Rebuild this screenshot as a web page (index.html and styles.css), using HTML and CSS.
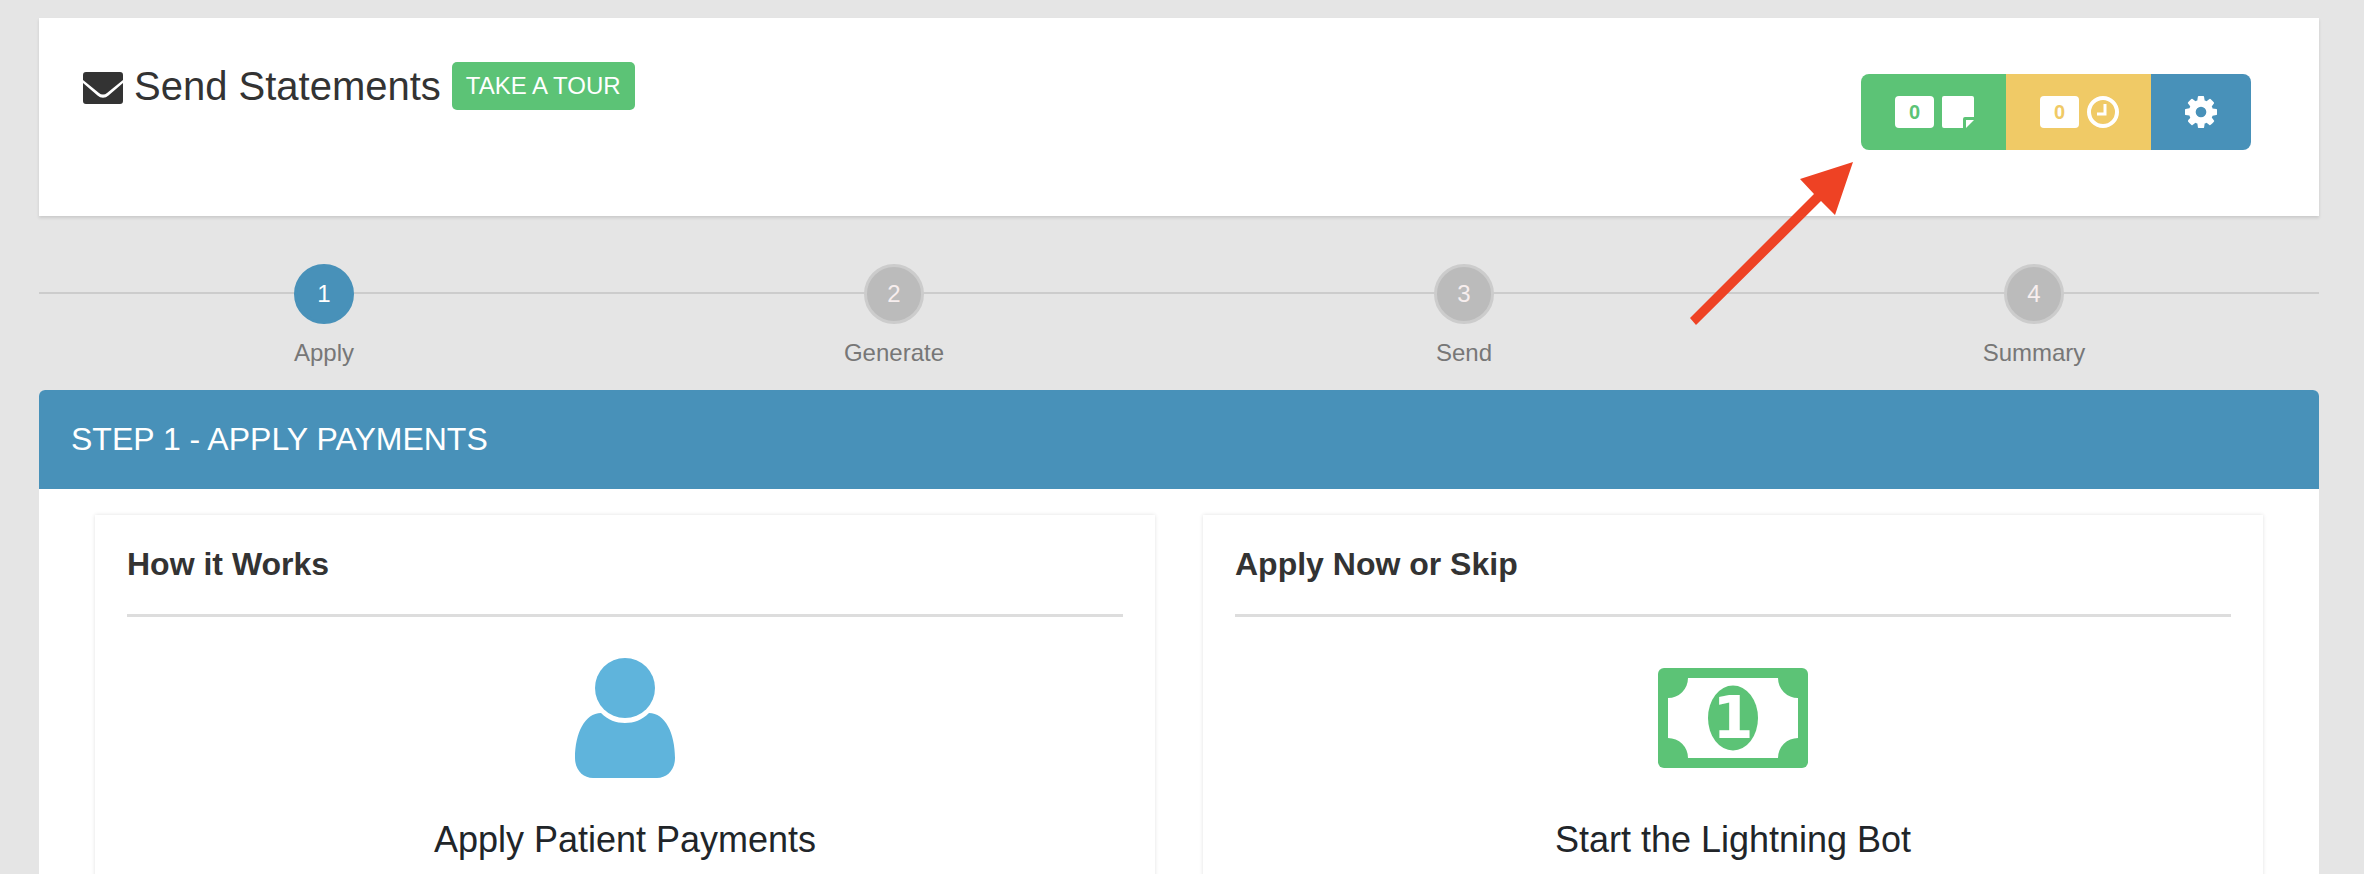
FILE: index.html
```html
<!DOCTYPE html>
<html lang="en">
<head>
<meta charset="utf-8">
<title>Send Statements</title>
<link rel="stylesheet" href="styles.css">
</head>
<body>
<div class="page">
  <header class="top-card">
    <div class="title-row">
      <svg class="mail-icon" viewBox="0 0 40 32"><path d="M3 0h34a3 3 0 0 1 3 3v5L24 21a6 6 0 0 1-8 0L0 8V3a3 3 0 0 1 3-3z" fill="#333"/><path d="M0 11l14.500 12.500a8 8 0 0 0 11 0L40 11v18a3 3 0 0 1-3 3H3a3 3 0 0 1-3-3z" fill="#333"/></svg>
      <h1 class="page-title">Send Statements</h1>
      <a class="tour-btn">TAKE A TOUR</a>
    </div>
    <div class="actions">
      <div class="action action-green">
        <span class="count count-green">0</span>
        <svg class="action-icon" viewBox="0 0 32 32"><path d="M2 0h28a2 2 0 0 1 2 2v19H23a2 2 0 0 0-2 2v9H2a2 2 0 0 1-2-2V2a2 2 0 0 1 2-2z" fill="#fff"/><path d="M24 24h8l-8 8z" fill="#fff"/></svg>
      </div>
      <div class="action action-yellow">
        <span class="count count-yellow">0</span>
        <svg class="action-icon" viewBox="0 0 32 32"><circle cx="16" cy="16" r="14" fill="none" stroke="#fff" stroke-width="4"/><path d="M18 8v10h-8" fill="none" stroke="#fff" stroke-width="3"/></svg>
      </div>
      <div class="action action-blue">
        <svg class="action-icon" viewBox="128 128 1536 1536"><path fill="#fff" d="M1152 896q0-106-75-181t-181-75-181 75-75 181 75 181 181 75 181-75 75-181zm512-109v222q0 12-8 23t-20 13l-185 28q-19 54-39 91 35 50 107 138 10 12 10 25t-9 23q-27 37-99 108t-94 71q-12 0-26-9l-138-108q-44 23-91 38-16 136-29 186-7 28-36 28h-222q-14 0-24.500-8.500t-11.500-21.500l-28-184q-49-16-90-37l-141 107q-10 9-25 9-14 0-25-11-126-114-165-168-7-10-7-23 0-12 8-23 15-21 51-66.500t54-70.500q-27-50-41-99l-183-27q-13-2-21-12.500t-8-23.500v-222q0-12 8-23t19-13l186-28q14-46 39-92-40-57-107-138-10-12-10-24 0-10 9-23 26-36 98.500-107.500t94.500-71.500q13 0 26 10l138 107q44-23 91-38 16-136 29-186 7-28 36-28h222q14 0 24.500 8.500t11.500 21.500l28 184q49 16 90 37l142-107q9-9 24-9 13 0 25 10 129 119 165 170 7 8 7 22 0 12-8 23-15 21-51 66.500t-54 70.500q26 50 41 98l183 28q13 2 21 12.500t8 23.500z"/></svg>
      </div>
    </div>
  </header>

  <nav class="steps">
    <div class="step step-active"><span class="step-dot">1</span><span class="step-label">Apply</span></div>
    <div class="step"><span class="step-dot">2</span><span class="step-label">Generate</span></div>
    <div class="step"><span class="step-dot">3</span><span class="step-label">Send</span></div>
    <div class="step"><span class="step-dot">4</span><span class="step-label">Summary</span></div>
  </nav>

  <section class="panel">
    <h2 class="panel-head">STEP 1 - APPLY PAYMENTS</h2>
    <div class="panel-body">
      <article class="info-card">
        <h3 class="info-title">How it Works</h3>
        <svg class="person-icon" viewBox="0 0 100 120"><circle cx="50" cy="30" r="30" fill="#5fb4dc"/><path d="M26 55C33 62 41 65 50 65s17-3 24-10C90 55 100 75 100 100c0 12-8 20-18 20H18C8 120 0 112 0 100 0 75 10 55 26 55z" fill="#5fb4dc"/></svg>
        <p class="info-sub">Apply Patient Payments</p>
      </article>
      <article class="info-card">
        <h3 class="info-title">Apply Now or Skip</h3>
        <svg class="bill-icon" viewBox="0 0 150 100">
          <rect width="150" height="100" rx="6" fill="#5cc376"/>
          <path d="M10 30a20 20 0 0 0 20-20h90a20 20 0 0 0 20 20v40a20 20 0 0 0-20 20H30a20 20 0 0 0-20-20z" fill="#fff"/>
          <ellipse cx="75" cy="50" rx="25" ry="32.500" fill="#5cc376"/>
          <text class="bill-digit" x="75" y="70" text-anchor="middle">1</text>
        </svg>
        <p class="info-sub">Start the Lightning Bot</p>
      </article>
    </div>
  </section>
</div>
<svg class="arrow" viewBox="0 0 170 170"><path fill="#ee4224" d="M168 2L150 55 136 41 11 165 5 158 129 34 115 19z"/></svg>
</body>
</html>
```

FILE: styles.css
```css
* { box-sizing: border-box; }
html, body { margin: 0; padding: 0; }
body {
  height: 874px;
  overflow: hidden;
  background: #e5e5e5;
  font-family: "Liberation Sans", Arial, sans-serif;
  color: #333;
  position: relative;
}
.page { padding: 18px 45px 0 39px; }

.top-card {
  height: 198px;
  background: #fff;
  box-shadow: 0 2px 3px rgba(0,0,0,.12);
  display: flex;
  justify-content: space-between;
  align-items: flex-start;
  padding: 44px 68px 0 44px;
}
.title-row { display: flex; align-items: center; height: 48px; }
.mail-icon { width: 40px; height: 32px; margin: 4px 11px 0 0; flex: none; }
.page-title { margin: 0; font-size: 40px; font-weight: 400; line-height: 48px; color: #333; }
.tour-btn {
  margin-left: 11px;
  height: 48px;
  padding: 0 14px;
  display: flex;
  align-items: center;
  background: #5cc376;
  color: #fff;
  font-size: 24px;
  border-radius: 5px;
}

.actions { display: flex; height: 76px; margin-top: 12px; border-radius: 8px; overflow: hidden; }
.action { display: flex; align-items: center; justify-content: center; gap: 8px; width: 145px; padding-left: 2px; }
.action-green { background: #5cc376; }
.action-yellow { background: #f0ca66; }
.action-blue { background: #4891b9; width: 100px; padding-left: 0; }
.count {
  width: 39px; height: 32px;
  background: #fff;
  border-radius: 4px;
  font-size: 20px;
  font-weight: 700;
  display: flex; align-items: center; justify-content: center;
}
.count-green { color: #5cc376; }
.count-yellow { color: #f0ca66; }
.action-icon { width: 32px; height: 32px; flex: none; }

.steps {
  display: grid;
  grid-template-columns: repeat(4, 1fr);
  height: 174px;
  padding-top: 48px;
  background: linear-gradient(#ccc, #ccc) 0 76px / 100% 2px no-repeat;
}
.step { display: flex; flex-direction: column; align-items: center; }
.step-dot {
  width: 60px; height: 60px;
  border-radius: 50%;
  background: #bbb;
  border: 3px solid #ccc;
  color: #f7eeee;
  font-size: 24px;
  display: flex; align-items: center; justify-content: center;
}
.step-active .step-dot { background: #4891b9; border-color: #4891b9; color: #fff; }
.step-label { margin-top: 15px; font-size: 24px; line-height: 28px; color: #777; }

.panel { background: #fff; border-radius: 6px 6px 0 0; overflow: hidden; height: 484px; }
.panel-head {
  margin: 0;
  height: 99px;
  padding: 0 32px;
  display: flex; align-items: center;
  background: #4891b9;
  color: #fff;
  font-size: 32px;
  font-weight: 400;
}
.panel-body { display: flex; gap: 48px; padding: 26px 56px 0; }
.info-card {
  flex: 1;
  height: 500px;
  padding: 31px 32px 0;
  background: #fff;
  box-shadow: 0 0 4px rgba(0,0,0,.12);
  display: flex; flex-direction: column; align-items: center;
}
.info-title {
  align-self: stretch;
  margin: 0;
  height: 71px;
  font-size: 32px;
  line-height: 36px;
  font-weight: 700;
  color: #333;
  border-bottom: 3px solid #ddd;
}
.person-icon { width: 100px; height: 120px; margin-top: 41px; }
.bill-icon { width: 150px; height: 100px; margin: 51px 0 10px; }
.bill-digit { font-family: "DejaVu Sans", sans-serif; font-weight: 700; font-size: 59px; fill: #fff; }
.info-sub { margin: 41px 0 0; font-size: 36px; line-height: 42px; color: #212529; }

.arrow { position: absolute; left: 1685px; top: 160px; width: 170px; height: 170px; }
```
